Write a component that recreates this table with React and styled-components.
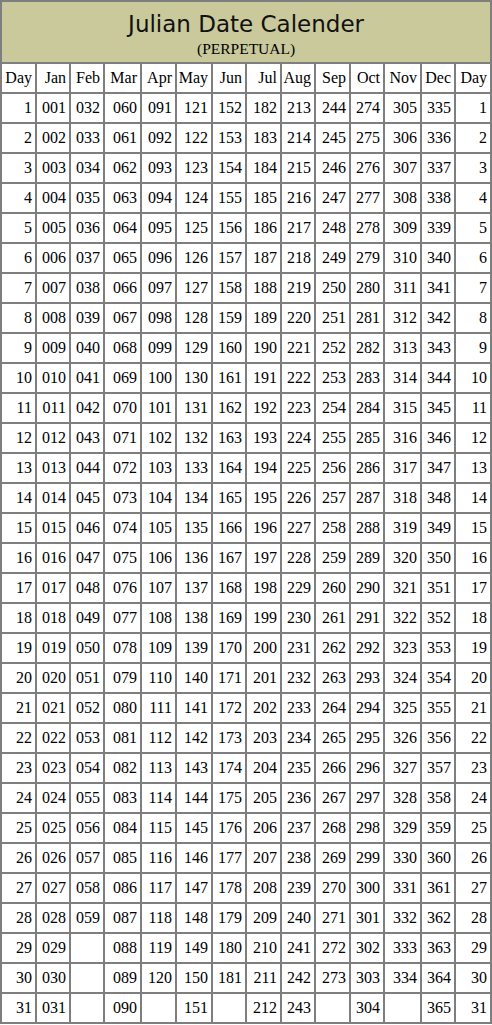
import React from 'react';
import styled, { createGlobalStyle } from 'styled-components';

const GlobalStyle = createGlobalStyle`
  body {
    margin: 0;
    background: #ffffff;
    font-family: "Liberation Serif", "Times New Roman", serif;
  }
`;

const months = [
  { name: 'Jan', days: 31, width: 34 },
  { name: 'Feb', days: 28, width: 34 },
  { name: 'Mar', days: 31, width: 37 },
  { name: 'Apr', days: 30, width: 35 },
  { name: 'May', days: 31, width: 36 },
  { name: 'Jun', days: 30, width: 34 },
  { name: 'Jul', days: 31, width: 35 },
  { name: 'Aug', days: 31, width: 34 },
  { name: 'Sep', days: 30, width: 35 },
  { name: 'Oct', days: 31, width: 34 },
  { name: 'Nov', days: 30, width: 37 },
  { name: 'Dec', days: 31, width: 34 },
];

// day-of-year offset for the first of each month (non leap year)
const offsets = months.reduce((acc, m, i) => {
  acc.push(i === 0 ? 0 : acc[i - 1] + months[i - 1].days);
  return acc;
}, []);

const StyledTable = styled.table`
  width: 492px;
  table-layout: fixed;
  border-collapse: separate;
  border-spacing: 0;
  border-top: 2px solid #7e7e7e;
  border-left: 2px solid #7e7e7e;
  font-size: 16px;
  color: #000;
`;

const Col = styled.col`
  width: ${(p) => p.$w}px;
`;

const TitleCell = styled.td`
  background: #c9c99b;
  text-align: center;
  height: 60px;
  padding: 0;
  border-right: 2px solid #7e7e7e;
  border-bottom: 2px solid #7e7e7e;
  vertical-align: top;
`;

const Title = styled.div`
  font-family: "Comic Sans MS", "DejaVu Sans", sans-serif;
  font-size: 23px;
  line-height: 26px;
  padding-top: 9px;
  color: #111;
`;

const Subtitle = styled.div`
  font-family: "Liberation Serif", "Times New Roman", serif;
  font-size: 15.5px;
  line-height: 18px;
  margin-top: 3px;
`;

const Cell = styled.td`
  box-sizing: border-box;
  height: 30px;
  padding: 0 3px 0 0;
  text-align: right;
  vertical-align: middle;
  white-space: nowrap;
  overflow: hidden;
  border-right: 2px solid #7e7e7e;
  border-bottom: 2px solid #7e7e7e;
`;

const pad = (n) => String(n).padStart(3, '0');

const days = Array.from({ length: 31 }, (_, i) => i + 1);

const App = () => {
  return (
    <>
      <GlobalStyle />
      <StyledTable>
        <colgroup>
          <Col $w={35} />
          {months.map((m) => (
            <Col key={m.name} $w={m.width} />
          ))}
          <Col $w={36} />
        </colgroup>
        <tbody>
          <tr>
            <TitleCell colSpan={14}>
              <Title>Julian Date Calender</Title>
              <Subtitle>(PERPETUAL)</Subtitle>
            </TitleCell>
          </tr>
          <tr>
            <Cell>Day</Cell>
            {months.map((m) => (
              <Cell key={m.name}>{m.name}</Cell>
            ))}
            <Cell>Day</Cell>
          </tr>
          {days.map((d) => (
            <tr key={d}>
              <Cell>{d}</Cell>
              {months.map((m, i) => (
                <Cell key={m.name}>{d <= m.days ? pad(offsets[i] + d) : ''}</Cell>
              ))}
              <Cell>{d}</Cell>
            </tr>
          ))}
        </tbody>
      </StyledTable>
    </>
  );
};

export default App;
